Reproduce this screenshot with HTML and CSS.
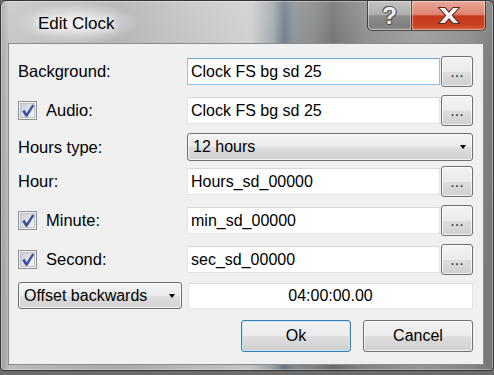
FILE: index.html
```html
<!DOCTYPE html>
<html>
<head>
<meta charset="utf-8">
<title>Edit Clock</title>
<link rel="stylesheet" href="styles.css">
</head>
<body>
<div class="window">
  <div class="titlebar">
    <div class="title">Edit Clock</div>
    <div class="caption">
      <div class="cap-btn help"><span class="help-glyph">?</span></div>
      <div class="cap-btn close">
        <svg width="24" height="19" viewBox="0 0 24 19">
          <defs>
            <linearGradient id="xg" x1="0" y1="0" x2="0" y2="1">
              <stop offset="0" stop-color="#ffffff"/>
              <stop offset="1" stop-color="#e4e4e4"/>
            </linearGradient>
          </defs>
          <polygon points="1.5,1.5 8,1.5 12,6.2 16,1.5 22.5,1.5 15.4,9.4 22.5,17.5 16,17.5 12,12.8 8,17.5 1.5,17.5 8.6,9.4" fill="url(#xg)" stroke="#5a2a20" stroke-width="1.1" stroke-linejoin="round"/>
        </svg>
      </div>
    </div>
  </div>
  <div class="client">
    <div class="row">
      <span class="label">Background:</span>
      <div class="field focus">Clock FS bg sd 25</div>
      <div class="browse">...</div>
    </div>
    <div class="row mt8">
      <span class="label">
        <span class="check"><svg width="19" height="19" viewBox="0 0 19 19"><defs><linearGradient id="cg1" x1="0" y1="0" x2="1" y2="1"><stop offset="0" stop-color="#c9ccd2"/><stop offset="1" stop-color="#f7f7f7"/></linearGradient></defs><rect x="0.5" y="0.5" width="18" height="18" fill="#f4f4f4" stroke="#8e8f8f"/><rect x="2.5" y="2.5" width="14" height="14" fill="url(#cg1)" stroke="#bcbfc4"/><polygon points="4.2,10.2 6.6,8.8 8.6,12.2 14.2,3.4 16.3,4.6 9.3,15.8 7.6,15.8" fill="#3b4f9e"/></svg></span>
        Audio:
      </span>
      <div class="field">Clock FS bg sd 25</div>
      <div class="browse">...</div>
    </div>
    <div class="row row-combo mt7">
      <span class="label">Hours type:</span>
      <div class="combo combo-wide"><span class="combo-text">12 hours</span><span class="arrow"></span></div>
    </div>
    <div class="row mt5">
      <span class="label">Hour:</span>
      <div class="field">Hours_sd_00000</div>
      <div class="browse">...</div>
    </div>
    <div class="row mt8">
      <span class="label">
        <span class="check"><svg width="19" height="19" viewBox="0 0 19 19"><defs><linearGradient id="cg2" x1="0" y1="0" x2="1" y2="1"><stop offset="0" stop-color="#c9ccd2"/><stop offset="1" stop-color="#f7f7f7"/></linearGradient></defs><rect x="0.5" y="0.5" width="18" height="18" fill="#f4f4f4" stroke="#8e8f8f"/><rect x="2.5" y="2.5" width="14" height="14" fill="url(#cg2)" stroke="#bcbfc4"/><polygon points="4.2,10.2 6.6,8.8 8.6,12.2 14.2,3.4 16.3,4.6 9.3,15.8 7.6,15.8" fill="#3b4f9e"/></svg></span>
        Minute:
      </span>
      <div class="field">min_sd_00000</div>
      <div class="browse">...</div>
    </div>
    <div class="row mt8">
      <span class="label">
        <span class="check"><svg width="19" height="19" viewBox="0 0 19 19"><defs><linearGradient id="cg3" x1="0" y1="0" x2="1" y2="1"><stop offset="0" stop-color="#c9ccd2"/><stop offset="1" stop-color="#f7f7f7"/></linearGradient></defs><rect x="0.5" y="0.5" width="18" height="18" fill="#f4f4f4" stroke="#8e8f8f"/><rect x="2.5" y="2.5" width="14" height="14" fill="url(#cg3)" stroke="#bcbfc4"/><polygon points="4.2,10.2 6.6,8.8 8.6,12.2 14.2,3.4 16.3,4.6 9.3,15.8 7.6,15.8" fill="#3b4f9e"/></svg></span>
        Second:
      </span>
      <div class="field">sec_sd_00000</div>
      <div class="browse">...</div>
    </div>
    <div class="row row-offset mt7">
      <div class="combo combo-offset"><span class="combo-text">Offset backwards</span><span class="arrow"></span></div>
      <div class="field time">04:00:00.00</div>
    </div>
    <div class="row row-actions mt11">
      <div class="btn default">Ok</div>
      <div class="btn">Cancel</div>
    </div>
  </div>
</div>
</body>
</html>
```

FILE: styles.css
```css
* { box-sizing: border-box; }
html, body { margin: 0; padding: 0; }
body {
  width: 494px;
  height: 375px;
  overflow: hidden;
  background: #6c6c6c;
  font-family: "Liberation Sans", Arial, sans-serif;
}
.window {
  width: 494px;
  height: 371px;
  border: 1px solid #353535;
  border-radius: 6px 6px 4px 4px;
  display: flex;
  flex-direction: column;
  background:
    radial-gradient(ellipse 62px 20px at 76px 22px, rgba(255,255,255,0.85), rgba(255,255,255,0) 100%),
    linear-gradient(180deg, rgba(255,255,255,0.12) 0px, rgba(255,255,255,0) 60px, rgba(0,0,0,0.06) 300px),
    linear-gradient(90deg, #a6a6a6 0px, #c6c6c6 8px, #bdbdbd 60px, #b3b3b3 120px, #c4c4c4 190px, #cfcfcf 250px, #a3a9ad 272px, #6d7c88 283px, #8b9196 293px, #888888 312px, #727272 332px, #8a8a8a 362px, #9d9d9d 420px, #8c8c8c 470px, #7a7a7a 494px);
  box-shadow: inset 0 0 0 1px rgba(255,255,255,0.35);
}
.titlebar {
  height: 42px;
  display: flex;
  align-items: flex-start;
  flex-shrink: 0;
}
.title {
  padding: 13px 0 0 37px;
  font-size: 17px;
  line-height: 20px;
  color: #000;
  text-shadow: 0 0 6px #fff, 0 0 10px rgba(255,255,255,0.9);
}
.caption {
  margin-left: auto;
  margin-right: 7px;
  display: flex;
}
.cap-btn {
  height: 30px;
  border: 1px solid rgba(45,45,45,0.8);
  border-top: none;
  display: flex;
  align-items: center;
  justify-content: center;
  box-shadow: inset 0 0 0 1px rgba(255,255,255,0.4);
}
.help {
  width: 44px;
  border-right: none;
  border-radius: 0 0 0 5px;
  background: linear-gradient(180deg, #c2c2c2 0%, #aeaeae 46%, #8c8c8c 52%, #7f7f7f 85%, #8e8e8e 100%);
}
.help-glyph {
  font-weight: bold;
  font-size: 24px;
  line-height: 24px;
  color: #eeeeee;
  text-shadow: 1px 0 #555, -1px 0 #555, 0 1px #555, 0 -1px #555, 1px 1px #555, -1px -1px #555;
  margin-top: 1px;
}
.close {
  width: 75px;
  border-radius: 0 0 5px 0;
  background: linear-gradient(180deg, #eaa89a 0%, #df8470 46%, #c83a1c 52%, #c9401f 82%, #d76446 100%);
}
.close svg { display: block; }

.client {
  margin-left: 7px;
  width: 476px;
  height: 322px;
  flex-shrink: 0;
  background: #f0f0f0;
  border: 1px solid #8b8b8b;
  padding: 12px 0 0 9px;
  display: flex;
  flex-direction: column;
  font-size: 16px;
  color: #000;
}
.row {
  display: flex;
  align-items: center;
  height: 31px;
  flex-shrink: 0;
}
.mt5 { margin-top: 5px; }
.mt7 { margin-top: 7px; }
.mt8 { margin-top: 8px; }
.mt11 { margin-top: 11px; }
.row-combo { height: 28px; }
.row-offset { height: 27px; }
.row-actions {
  height: 32px;
  justify-content: flex-end;
  padding-right: 10px;
}
.label {
  width: 169px;
  display: flex;
  align-items: center;
  white-space: nowrap;
  font-size: 16.5px;
}
.check {
  width: 19px;
  height: 19px;
  margin-right: 9px;
  margin-top: -1px;
}
.check svg { display: block; }
.field {
  width: 253px;
  height: 27px;
  background: #fff;
  border: 1px solid #e3e4e8;
  border-top-color: #d6d8dc;
  padding: 0 3px;
  line-height: 25px;
  white-space: nowrap;
}
.field.focus {
  border-color: #8fc0e8;
  border-top-color: #6aa6dc;
}
.field.time {
  width: 285px;
  height: 26px;
  line-height: 24px;
  margin-left: 6px;
  text-align: center;
}
.browse {
  width: 32px;
  height: 31px;
  margin-left: 1px;
  border: 1px solid #707070;
  border-radius: 3px;
  background: linear-gradient(180deg, #f3f3f3 0%, #ebebeb 50%, #dddddd 52%, #d0d0d0 100%);
  box-shadow: inset 0 0 0 1px rgba(255,255,255,0.7);
  display: flex;
  align-items: center;
  justify-content: center;
  color: #2b3550;
  line-height: 1;
}
.combo {
  height: 100%;
  border: 1px solid #707070;
  border-radius: 3px;
  background: linear-gradient(180deg, #f3f3f3 0%, #ebebeb 50%, #dddddd 52%, #d2d2d2 100%);
  box-shadow: inset 0 0 0 1px rgba(255,255,255,0.7);
  display: flex;
  align-items: center;
  padding-left: 5px;
  white-space: nowrap;
}
.combo-wide { width: 286px; }
.combo-offset { width: 164px; }
.arrow {
  margin-left: auto;
  margin-right: 6px;
  width: 0;
  height: 0;
  border-left: 3.5px solid transparent;
  border-right: 3.5px solid transparent;
  border-top: 4px solid #000;
}
.btn {
  width: 110px;
  height: 32px;
  border: 1px solid #707070;
  border-radius: 3px;
  background: linear-gradient(180deg, #f3f3f3 0%, #ebebeb 50%, #dddddd 52%, #d0d0d0 100%);
  box-shadow: inset 0 0 0 1px rgba(255,255,255,0.7);
  display: flex;
  align-items: center;
  justify-content: center;
}
.btn + .btn { margin-left: 12px; }
.btn.default {
  border-color: #3c7fb1;
  box-shadow: inset 0 0 0 1px #bfe4fa;
}
```
